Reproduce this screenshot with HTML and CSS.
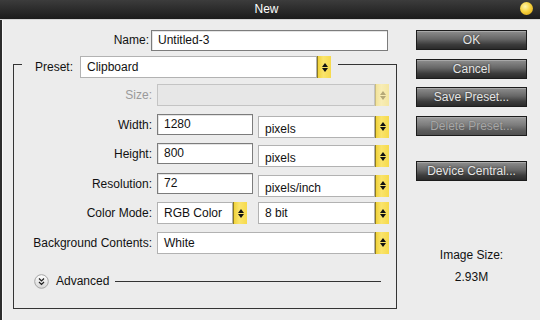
FILE: index.html
```html
<!DOCTYPE html>
<html lang="en">

<head>
    <meta charset="UTF-8">
    <meta name="viewport" content="width=device-width, initial-scale=1.0">
    <title>New</title>
    <link rel="stylesheet" href="styles.css">
</head>

<body>
    <div class="window">
        <div class="titlebar">
            <span></span>
            <span class="title">New</span>
            <span class="orb"></span>
        </div>
        <div class="main">
            <div class="form">
                <div class="name-row">
                    <span class="name-label">Name:</span>
                    <div class="field name-field">Untitled-3</div>
                </div>
                <fieldset class="group">
                    <legend class="preset">
                        <span class="preset-label">Preset:</span>
                        <div class="select preset-select"><span class="value">Clipboard</span></div>
                        <span class="spin"></span>
                    </legend>
                    <div class="row">
                        <span class="label muted">Size:</span>
                        <div class="select size-select disabled"><span class="value"></span></div>
                        <span class="spin pale"></span>
                    </div>
                    <div class="row">
                        <span class="label">Width:</span>
                        <div class="field num">1280</div>
                        <div class="select unit"><span class="value low">pixels</span></div>
                        <span class="spin"></span>
                    </div>
                    <div class="row">
                        <span class="label">Height:</span>
                        <div class="field num">800</div>
                        <div class="select unit"><span class="value low">pixels</span></div>
                        <span class="spin"></span>
                    </div>
                    <div class="row">
                        <span class="label">Resolution:</span>
                        <div class="field num">72</div>
                        <div class="select unit"><span class="value low">pixels/inch</span></div>
                        <span class="spin"></span>
                    </div>
                    <div class="row">
                        <span class="label">Color Mode:</span>
                        <div class="select mode"><span class="value">RGB Color</span></div>
                        <span class="spin"></span>
                        <div class="select unit bits"><span class="value">8 bit</span></div>
                        <span class="spin"></span>
                    </div>
                    <div class="row">
                        <span class="label">Background Contents:</span>
                        <div class="select size-select"><span class="value">White</span></div>
                        <span class="spin"></span>
                    </div>
                    <div class="advanced">
                        <svg width="15" height="15" viewBox="0 0 15 15">
                            <defs>
                                <linearGradient id="adv" x1="0" y1="0" x2="0" y2="1">
                                    <stop offset="0" stop-color="#ffffff" />
                                    <stop offset="1" stop-color="#d6d6d6" />
                                </linearGradient>
                            </defs>
                            <circle cx="7.5" cy="7.5" r="6.8" fill="url(#adv)" stroke="#a4a4a4" />
                            <path d="M5 4.5l2.5 2.5 2.5-2.5M5 8l2.5 2.5 2.5-2.5" fill="none" stroke="#222"
                                stroke-width="1.2" />
                        </svg>
                        <span class="adv-text">Advanced</span>
                        <span class="adv-line"></span>
                    </div>
                </fieldset>
            </div>
            <div class="side">
                <div class="btn">OK</div>
                <div class="btn">Cancel</div>
                <div class="btn">Save Preset...</div>
                <div class="btn off">Delete Preset...</div>
                <div class="btn device">Device Central...</div>
                <div class="info">
                    <p>Image Size:</p>
                    <p class="size">2.93M</p>
                </div>
            </div>
        </div>
    </div>
</body>

</html>
```

FILE: styles.css
```css
* {
    margin: 0;
    padding: 0;
    box-sizing: border-box;
}

body {
    font-family: "Liberation Sans", Arial, sans-serif;
    font-size: 12px;
    color: #111;
    background: #ececec;
}

.window {
    width: 540px;
    height: 320px;
    display: flex;
    flex-direction: column;
}

/* title bar */
.titlebar {
    height: 20px;
    display: grid;
    grid-template-columns: 1fr auto 1fr;
    align-items: center;
    background: linear-gradient(#3c3c3c, #1b1b1b);
    border-bottom: 1px solid #d4d4d4;
    padding-right: 7px;
}

.title {
    color: #fff;
    font-size: 12px;
    padding-bottom: 1px;
}

.orb {
    justify-self: end;
    width: 13px;
    height: 13px;
    border-radius: 50%;
    margin-top: -3px;
    background: radial-gradient(circle at 40% 35%, #fff6b0 0, #f6d340 45%, #d49a08 100%);
}

.main {
    flex: 1;
    display: flex;
    border-left: 2px solid #2c2c2c;
    box-shadow: inset 1px 0 0 #fafafa;
    padding-top: 10px;
}

.form {
    width: 395px;
}

/* name */
.name-row {
    display: flex;
    height: 21px;
}

.name-label {
    width: 147px;
    text-align: right;
    line-height: 21px;
    margin-right: 2px;
}

.field {
    background: #fff;
    border: 1px solid #7c7c7c;
    box-shadow: inset 1px 1px 0 #e4e4e4;
    padding-left: 6px;
    line-height: 19px;
}

.name-field {
    width: 237px;
}

/* group box */
.group {
    margin-left: 11px;
    width: 384px;
    border: 1px solid #343434;
    padding: 6px 0 19px 0;
}

.preset {
    margin-left: 8px;
    padding: 5px 7px 0 13px;
    display: flex;
    align-items: center;
}

.preset-label {
    margin-right: 7px;
}

.select {
    height: 22px;
    background: #fff;
    border: 1px solid #b2b2b2;
    padding-left: 6px;
    display: flex;
    align-items: center;
}

.preset-select {
    width: 237px;
}

.spin {
    width: 14px;
    height: 22px;
    background: linear-gradient(90deg, #f0d23a, #fae46c 40%, #f6da4c);
    border-left: 1px solid #8c7a22;
    display: flex;
    flex-direction: column;
    align-items: center;
    justify-content: center;
    gap: 1px;
}

.spin::before,
.spin::after {
    content: "";
    border-left: 3px solid transparent;
    border-right: 3px solid transparent;
}

.spin::before {
    border-bottom: 4px solid #111;
}

.spin::after {
    border-top: 4px solid #111;
}

.spin.pale {
    background: linear-gradient(90deg, #f2e39a, #f8edb6 40%, #f4e6a2);
    border-left-color: #c9bb80;
}

.spin.pale::before {
    border-bottom-color: #b5a878;
}

.spin.pale::after {
    border-top-color: #b5a878;
}

.row {
    display: flex;
    align-items: flex-start;
    height: 22px;
    margin-bottom: 7.6px;
}

.label {
    width: 138px;
    margin-right: 5px;
    text-align: right;
    line-height: 22px;
}

.muted {
    color: #9a9a9a;
}

.size-select {
    width: 218px;
}

.disabled {
    background: #e7e7e7;
    border-color: #c4c4c4;
}

.num {
    width: 96px;
    height: 21px;
}

.unit {
    width: 117px;
    margin-left: 5px;
}

.row .unit,
.row .unit + .spin {
    margin-top: 2px;
}

.row .bits,
.row .bits + .spin {
    margin-top: 0;
}

.low {
    padding-top: 4px;
}

.mode {
    width: 76px;
}

.bits {
    margin-left: 11px;
}

/* advanced */
.advanced {
    display: flex;
    align-items: center;
    height: 15px;
    margin-top: 20px;
    padding-left: 20px;
    padding-right: 15px;
}

.adv-text {
    margin-left: 7px;
    margin-right: 6px;
}

.adv-line {
    flex: 1;
    height: 1px;
    background: #333;
}

/* buttons */
.side {
    margin-left: 19px;
    width: 111px;
    display: flex;
    flex-direction: column;
}

.btn {
    height: 20px;
    margin-bottom: 8.5px;
    border: 1px solid #1c1c1c;
    background: linear-gradient(#8e8e8e, #666 45%, #3c3c3c 75%, #2a2a2a);
    box-shadow: inset 0 1px 0 #a8a8a8;
    color: #e6e6e6;
    text-align: center;
    line-height: 18px;
    text-shadow: 0 0 2px #222;
}

.btn.off {
    background: linear-gradient(#9c9c9c, #7c7c7c 45%, #5c5c5c 75%, #505050);
    color: #a8a8a8;
    text-shadow: 0 0 1px #555;
}

.device {
    margin-top: 17px;
}

.info {
    margin-top: 58px;
    text-align: center;
    line-height: 15px;
}

.size {
    margin-top: 7px;
}
```
